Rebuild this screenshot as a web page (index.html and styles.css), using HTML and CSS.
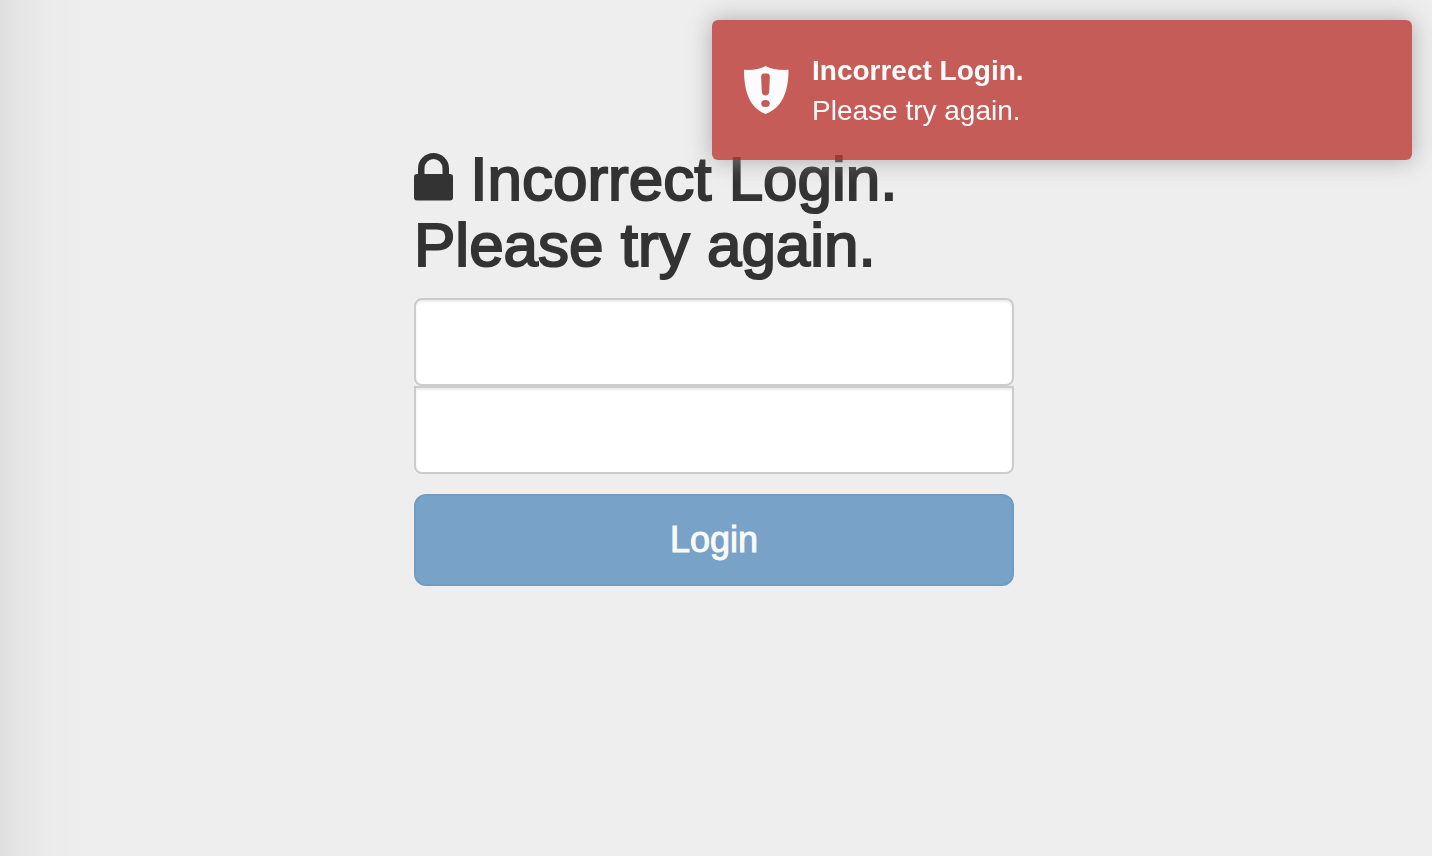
FILE: index.html
```html
<!DOCTYPE html>
<html lang="en">
<head>
<meta charset="utf-8">
<meta name="viewport" content="width=device-width, initial-scale=1">
<title>Login</title>
<link rel="stylesheet" href="styles.css">
</head>
<body>
<main class="page">
  <form class="signin">
    <h1 class="signin-heading"><svg class="lock" viewBox="0 0 39 48" aria-hidden="true"><path fill-rule="evenodd" d="M4 21V15.500A15.500 15.500 0 0 1 35 15.500V21H36A3 3 0 0 1 39 24V44.500A3 3 0 0 1 36 47.500H3A3 3 0 0 1 0 44.500V24A3 3 0 0 1 3 21ZM10.500 21H28.500V15A9 9 0 0 0 10.500 15Z"/></svg> Incorrect Login.<br>Please try again.</h1>
    <input class="field field-user" type="text" aria-label="Username">
    <input class="field field-pass" type="password" aria-label="Password">
    <button class="login" type="submit">Login</button>
  </form>
</main>
<div class="toast" role="alert">
  <svg class="shield" viewBox="0 0 48 50" aria-hidden="true"><path fill-rule="evenodd" d="M23.500 1C29 4 37 5.300 46.500 4.800C46.500 27 40 43 23.500 49C8 43 2 27 2 4.800C11 5.300 18 4 23.500 1ZM22 8.500C19.500 8.500 19 10 19.200 13L19.800 27C20 31.500 27 31.500 27.200 27L27.800 13C28 10 27.500 8.500 25 8.500ZM23.500 35A4.300 3.500 0 0 0 23.500 42A4.300 3.500 0 0 0 23.500 35Z"/></svg>
  <div class="toast-text">
    <strong class="toast-title">Incorrect Login.</strong>
    <div>Please try again.</div>
  </div>
</div>
</body>
</html>
```
FILE: styles.css
```css
* {
  box-sizing: border-box;
}

body {
  margin: 0;
  min-height: 100vh;
  background: #eee linear-gradient(to right, #dfdfdf 0, #e5e5e5 20px, #eaeaea 42px, #ededed 76px, #eee 120px);
  color: #333;
  font-family: "Helvetica Neue", "Liberation Sans", Arial, sans-serif;
}

.page {
  padding: 146px 4px 40px 0;
}

.signin {
  max-width: 600px;
  margin: 0 auto;
}

.signin-heading {
  margin: 0 0 20px;
  font-size: 62px;
  font-weight: 400;
  line-height: 66px;
  -webkit-text-stroke: 2px #333;
}

.lock {
  width: 39px;
  height: 48px;
  fill: #333;
  stroke: none;
  vertical-align: -1px;
}

.field {
  display: block;
  width: 100%;
  height: 88px;
  padding: 20px;
  border: 2px solid #ccc;
  border-radius: 8px;
  background: #fff;
  box-shadow: inset 0 2px 2px rgba(0, 0, 0, 0.075);
  font-size: 32px;
}

.field-pass {
  margin-bottom: 20px;
  border-radius: 0 0 8px 8px;
}

.login {
  display: block;
  width: 100%;
  height: 92px;
  border: 2px solid #729bc1;
  border-radius: 12px;
  background: #78a2c8;
  color: #fafafa;
  font-family: inherit;
  font-size: 36px;
  line-height: 48px;
  -webkit-text-stroke: 1px #fafafa;
}

.toast {
  position: fixed;
  top: 20px;
  right: 20px;
  display: flex;
  align-items: flex-start;
  gap: 22px;
  width: 700px;
  max-width: calc(100% - 40px);
  padding: 31px 30px 29px;
  border-radius: 6px;
  background: #bb3732;
  box-shadow: 0 0 24px #999;
  color: #fff;
  font-size: 28px;
  line-height: 40px;
  opacity: 0.8;
}

.shield {
  width: 48px;
  height: 50px;
  margin-top: 14px;
  fill: #fff;
}

.toast-title {
  display: block;
}
```
